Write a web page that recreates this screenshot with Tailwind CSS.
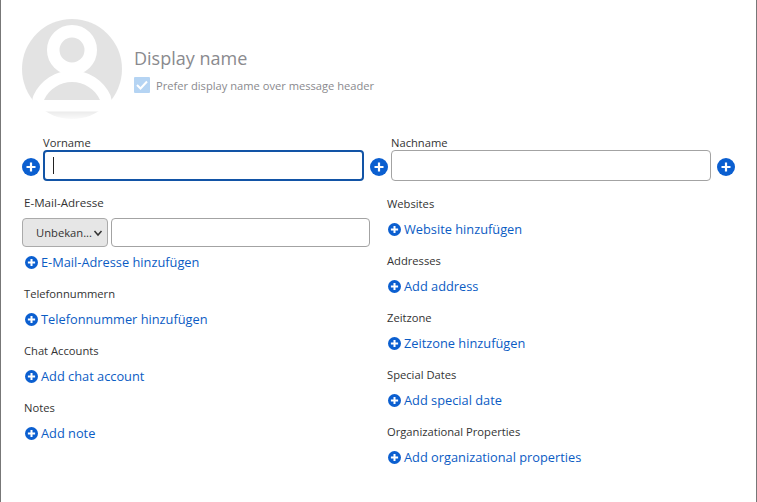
<!DOCTYPE html>
<html lang="en">

<head>
  <meta charset="UTF-8" />
  <title>Contact</title>
  <script src="https://cdn.jsdelivr.net/npm/@tailwindcss/browser@4"></script>
</head>

<body class="h-[502px] w-[757px] overflow-hidden bg-white font-['Open_Sans','Noto_Sans',sans-serif] text-[#222]">
  <div class="h-full border-x border-x-[#777] pl-[21px]">

    <!-- Avatar + display name -->
    <div class="flex h-[136px] pt-[19px]">
      <div class="h-[100px] w-[100px] shrink-0">
        <svg viewBox="0 0 100 100" class="h-[100px] w-[100px]">
          <defs>
            <linearGradient id="avatarFill" x1="0" y1="0" x2="0" y2="1">
              <stop offset="0.900" stop-color="#e3e3e3" />
              <stop offset="0.930" stop-color="#ececec" />
              <stop offset="1" stop-color="#fafafa" />
            </linearGradient>
          </defs>
          <circle cx="50" cy="50" r="50" fill="url(#avatarFill)" />
          <path d="M22 81 C27 70 38 63 50 63 C62 63 73 70 78 81 Z" fill="#e3e3e3" stroke="#fff" stroke-width="23" stroke-linejoin="round" />
          <path d="M22 81 C27 70 38 63 50 63 C62 63 73 70 78 81 Z" fill="#e3e3e3" />
          <circle cx="50" cy="31" r="18.750" fill="#e3e3e3" stroke="#fff" stroke-width="12.500" />
        </svg>
      </div>
      <div class="ml-[12px] pt-[26px]">
        <div class="text-[18px] leading-[26px] text-[#8a8a8e]">Display name</div>
        <label class="mt-[5px] flex items-center gap-[6px]">
          <span class="flex h-[16px] w-[16px] items-center justify-center rounded-[1px] bg-[#b5d4f3]">
            <svg viewBox="0 0 16 16" class="h-[16px] w-[16px]"><path d="M3 8 L6.500 11.500 L13 4.500" fill="none" stroke="#fff" stroke-width="2" /></svg>
          </span>
          <span class="pt-[2px] text-[11.150px] text-[#8a8a8e]">Prefer display name over message header</span>
        </label>
      </div>
    </div>

    <!-- Name fields -->
    <div class="flex items-end">
      <svg viewBox="0 0 18 18" class="mb-[5px] h-[18px] w-[18px]"><circle cx="9" cy="9" r="9" fill="#0b5fd0" /><path d="M9 4.500 V13.500 M4.500 9 H13.500" stroke="#fff" stroke-width="2.200" /></svg>
      <div class="ml-[3px] w-[321px]">
        <div class="pb-px text-[11.200px] leading-[13px] text-[#333]">Vorname</div>
        <div class="flex h-[31px] items-center rounded-[4px] border-2 border-[#1254a6] pl-[8px]">
          <span class="h-[17px] w-px bg-[#222]"></span>
        </div>
      </div>
      <svg viewBox="0 0 18 18" class="mb-[5px] ml-[6px] h-[18px] w-[18px]"><circle cx="9" cy="9" r="9" fill="#0b5fd0" /><path d="M9 4.500 V13.500 M4.500 9 H13.500" stroke="#fff" stroke-width="2.200" /></svg>
      <div class="ml-[3px] w-[320px]">
        <div class="pb-px text-[11.200px] leading-[13px] text-[#333]">Nachname</div>
        <div class="h-[31px] rounded-[4px] border border-[#a3a3a3]"></div>
      </div>
      <svg viewBox="0 0 18 18" class="mb-[5px] ml-[6px] h-[18px] w-[18px]"><circle cx="9" cy="9" r="9" fill="#0b5fd0" /><path d="M9 4.500 V13.500 M4.500 9 H13.500" stroke="#fff" stroke-width="2.200" /></svg>
    </div>

    <div class="mt-[15px] flex">
      <!-- Left column -->
      <div class="w-[365px]">
        <div class="pb-[2px] pl-[2px] text-[11.600px] leading-[14px] text-[#333]">E-Mail-Adresse</div>
        <div class="mt-[6px] flex gap-[3px]">
          <div class="flex h-[29px] w-[86px] items-center justify-end gap-[1px] rounded-[4px] border border-[#aaa] bg-[#e6e6e6] pr-[4px] text-[11.200px] text-[#333]">
            <span class="pt-[2px]">Unbekan...</span>
            <svg viewBox="0 0 10 10" class="h-[10px] w-[10px]"><path d="M1.500 3 L5 7 L8.500 3" fill="none" stroke="#333" stroke-width="1.500" /></svg>
          </div>
          <div class="h-[29px] w-[259px] rounded-[4px] border border-[#a3a3a3]"></div>
        </div>
        <a class="mt-[5px] flex h-[20px] items-center gap-[3px] pl-[3px] text-[12.800px] text-[#0b5cc4]">
          <svg viewBox="0 0 18 18" class="h-[13px] w-[13px]"><circle cx="9" cy="9" r="9" fill="#0b5fd0" /><path d="M9 4 V14 M4 9 H14" stroke="#fff" stroke-width="2.800" /></svg>
          <span class="pt-[2px]">E-Mail-Adresse hinzufügen</span>
        </a>
        <div class="mt-[14px] pl-[2px] text-[11.200px] font-medium leading-[16px] text-[#333]">Telefonnummern</div>
        <a class="mt-[7px] flex h-[20px] items-center gap-[3px] pl-[3px] text-[12.800px] text-[#0b5cc4]">
          <svg viewBox="0 0 18 18" class="h-[13px] w-[13px]"><circle cx="9" cy="9" r="9" fill="#0b5fd0" /><path d="M9 4 V14 M4 9 H14" stroke="#fff" stroke-width="2.800" /></svg>
          <span class="pt-[2px]">Telefonnummer hinzufügen</span>
        </a>
        <div class="mt-[14px] pl-[2px] text-[11.200px] font-medium leading-[16px] text-[#333]">Chat Accounts</div>
        <a class="mt-[7px] flex h-[20px] items-center gap-[3px] pl-[3px] text-[12.800px] text-[#0b5cc4]">
          <svg viewBox="0 0 18 18" class="h-[13px] w-[13px]"><circle cx="9" cy="9" r="9" fill="#0b5fd0" /><path d="M9 4 V14 M4 9 H14" stroke="#fff" stroke-width="2.800" /></svg>
          <span class="pt-[2px]">Add chat account</span>
        </a>
        <div class="mt-[14px] pl-[2px] text-[11.200px] font-medium leading-[16px] text-[#333]">Notes</div>
        <a class="mt-[7px] flex h-[20px] items-center gap-[3px] pl-[3px] text-[12.800px] text-[#0b5cc4]">
          <svg viewBox="0 0 18 18" class="h-[13px] w-[13px]"><circle cx="9" cy="9" r="9" fill="#0b5fd0" /><path d="M9 4 V14 M4 9 H14" stroke="#fff" stroke-width="2.800" /></svg>
          <span class="pt-[2px]">Add note</span>
        </a>
      </div>

      <!-- Right column -->
      <div class="flex flex-col gap-[14px]">
        <div>
          <div class="text-[11.200px] font-medium leading-[16px] text-[#333]">Websites</div>
          <a class="mt-[7px] flex h-[20px] items-center gap-[3px] pl-px text-[12.800px] text-[#0b5cc4]">
            <svg viewBox="0 0 18 18" class="h-[13px] w-[13px]"><circle cx="9" cy="9" r="9" fill="#0b5fd0" /><path d="M9 4 V14 M4 9 H14" stroke="#fff" stroke-width="2.800" /></svg>
            <span class="pt-[2px]">Website hinzufügen</span>
          </a>
        </div>
        <div>
          <div class="text-[11.200px] font-medium leading-[16px] text-[#333]">Addresses</div>
          <a class="mt-[7px] flex h-[20px] items-center gap-[3px] pl-px text-[12.800px] text-[#0b5cc4]">
            <svg viewBox="0 0 18 18" class="h-[13px] w-[13px]"><circle cx="9" cy="9" r="9" fill="#0b5fd0" /><path d="M9 4 V14 M4 9 H14" stroke="#fff" stroke-width="2.800" /></svg>
            <span class="pt-[2px]">Add address</span>
          </a>
        </div>
        <div>
          <div class="text-[11.200px] font-medium leading-[16px] text-[#333]">Zeitzone</div>
          <a class="mt-[7px] flex h-[20px] items-center gap-[3px] pl-px text-[12.800px] text-[#0b5cc4]">
            <svg viewBox="0 0 18 18" class="h-[13px] w-[13px]"><circle cx="9" cy="9" r="9" fill="#0b5fd0" /><path d="M9 4 V14 M4 9 H14" stroke="#fff" stroke-width="2.800" /></svg>
            <span class="pt-[2px]">Zeitzone hinzufügen</span>
          </a>
        </div>
        <div>
          <div class="text-[11.200px] font-medium leading-[16px] text-[#333]">Special Dates</div>
          <a class="mt-[7px] flex h-[20px] items-center gap-[3px] pl-px text-[12.800px] text-[#0b5cc4]">
            <svg viewBox="0 0 18 18" class="h-[13px] w-[13px]"><circle cx="9" cy="9" r="9" fill="#0b5fd0" /><path d="M9 4 V14 M4 9 H14" stroke="#fff" stroke-width="2.800" /></svg>
            <span class="pt-[2px]">Add special date</span>
          </a>
        </div>
        <div>
          <div class="text-[11.200px] font-medium leading-[16px] text-[#333]">Organizational Properties</div>
          <a class="mt-[7px] flex h-[20px] items-center gap-[3px] pl-px text-[12.800px] text-[#0b5cc4]">
            <svg viewBox="0 0 18 18" class="h-[13px] w-[13px]"><circle cx="9" cy="9" r="9" fill="#0b5fd0" /><path d="M9 4 V14 M4 9 H14" stroke="#fff" stroke-width="2.800" /></svg>
            <span class="pt-[2px]">Add organizational properties</span>
          </a>
        </div>
      </div>
    </div>
  </div>
</body>

</html>
